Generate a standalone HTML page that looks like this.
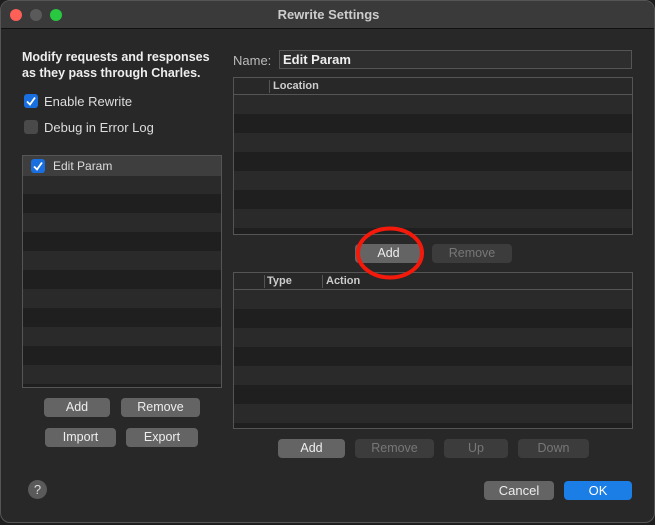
<!DOCTYPE html>
<html><head><style>
*{margin:0;padding:0;box-sizing:border-box}
body{width:655px;height:525px;background:#1e1e1e;font-family:"Liberation Sans",sans-serif;position:relative;overflow:hidden;color:#ddd}
.win{position:absolute;left:0;top:0;width:655px;height:523px;background:#282828;border-radius:10px;border:1px solid #555;overflow:hidden}
.tb{position:absolute;left:0;top:0;width:655px;height:28px;background:#3a3a3a;border-bottom:1px solid #111;text-align:center;font-weight:bold;font-size:13px;line-height:28px;color:#ccc}
.dot{position:absolute;top:8px;width:12px;height:12px;border-radius:50%}
.a{position:absolute}
.t{position:absolute;font-size:13px;color:#ddd;white-space:nowrap}
.btn{position:absolute;height:19px;background:#646464;border-radius:4px;font-size:12.5px;text-align:center;line-height:19px;color:#eee}
.dis{background:#3c3c3c;color:#777}
.cb{position:absolute;width:14px;height:14px;border-radius:3px;background:#1a6fe0}
.cb svg{position:absolute;left:2px;top:2px}
.tbl{position:absolute;border:1px solid #555;overflow:hidden;background:repeating-linear-gradient(#2a2a2a 0 19px,#1f1f1f 19px 38px);background-position:0 17px}
.hdr{position:absolute;left:0;top:0;right:0;height:17px;background:#282828;border-bottom:1px solid #555;font-size:11px;font-weight:bold;color:#ccc}
</style></head><body>
<div class="win">
<div class="tb">Rewrite Settings</div>
<div class="dot" style="left:9px;background:#fe5f57"></div>
<div class="dot" style="left:29px;background:#5a5a5a"></div>
<div class="dot" style="left:49px;background:#28c840"></div>

<div class="t" style="left:21px;top:48px;font-weight:bold;font-size:12.5px;line-height:16px;color:#eee">Modify requests and responses<br>as they pass through Charles.</div>
<div class="cb" style="left:23px;top:93px"><svg width="10" height="10" viewBox="0 0 10 10"><path d="M1 5.5L4 8.5L9 1.5" stroke="#fff" stroke-width="1.8" fill="none"/></svg></div>
<div class="t" style="left:43px;top:93px">Enable Rewrite</div>
<div class="cb" style="left:23px;top:119px;background:#4a4a4a"></div>
<div class="t" style="left:43px;top:119px">Debug in Error Log</div>

<div class="tbl" style="left:21px;top:154px;width:200px;height:233px;background:repeating-linear-gradient(#1f1f1f 0 19px,#2a2a2a 19px 38px)">
<div class="a" style="left:0;top:0;width:198px;height:20px;background:#3e3e3e"></div>
<div class="cb" style="left:8px;top:3px"><svg width="10" height="10" viewBox="0 0 10 10"><path d="M1 5.5L4 8.5L9 1.5" stroke="#fff" stroke-width="1.8" fill="none"/></svg></div>
<div class="t" style="left:30px;top:3px;font-size:12px">Edit Param</div>
</div>

<div class="btn" style="left:43px;top:397px;width:66px">Add</div>
<div class="btn" style="left:120px;top:397px;width:79px">Remove</div>
<div class="btn" style="left:44px;top:427px;width:71px">Import</div>
<div class="btn" style="left:125px;top:427px;width:72px">Export</div>

<div class="t" style="left:232px;top:52px;color:#bbb">Name:</div>
<div class="a" style="left:278px;top:49px;width:353px;height:19px;border:1px solid #555;background:#2e2e2e;font-size:13px;font-weight:bold;color:#eee;padding:1px 0 0 3px">Edit Param</div>

<div class="tbl" style="left:232px;top:76px;width:400px;height:158px">
<div class="hdr"><div class="a" style="left:35px;top:2px;height:13px;border-left:1px solid #555"></div><div class="a" style="left:39px;top:2px">Location</div></div>
</div>
<div class="btn" style="left:354px;top:243px;width:67px">Add</div>
<div class="btn dis" style="left:431px;top:243px;width:80px">Remove</div>

<div class="tbl" style="left:232px;top:271px;width:400px;height:157px">
<div class="hdr"><div class="a" style="left:30px;top:2px;height:13px;border-left:1px solid #555"></div><div class="a" style="left:33px;top:2px">Type</div><div class="a" style="left:88px;top:2px;height:13px;border-left:1px solid #555"></div><div class="a" style="left:92px;top:2px">Action</div></div>
</div>
<div class="btn" style="left:277px;top:438px;width:67px">Add</div>
<div class="btn dis" style="left:354px;top:438px;width:79px">Remove</div>
<div class="btn dis" style="left:443px;top:438px;width:64px">Up</div>
<div class="btn dis" style="left:517px;top:438px;width:71px">Down</div>

<div class="a" style="left:27px;top:479px;width:19px;height:19px;border-radius:50%;background:#5a5a5a;color:#ddd;font-size:13px;text-align:center;line-height:19px">?</div>
<div class="btn" style="left:483px;top:480px;width:70px;font-size:13px">Cancel</div>
<div class="btn" style="left:563px;top:480px;width:68px;background:#1a7ee6;color:#fff;font-size:13px">OK</div>

<svg class="a" style="left:0;top:0" width="655" height="525"><ellipse cx="389" cy="252" rx="32" ry="24.5" fill="none" stroke="#f31a0c" stroke-width="4"/></svg>
</div>
</body></html>
